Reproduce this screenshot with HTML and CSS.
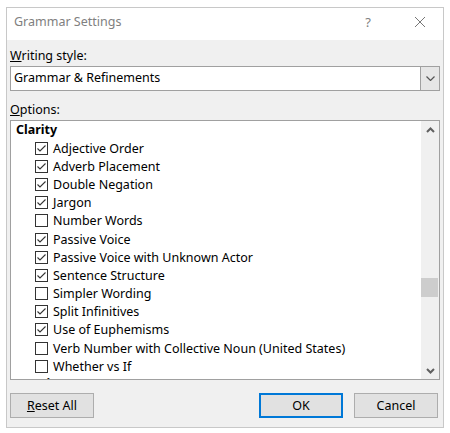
FILE: index.html
```html
<!DOCTYPE html>
<html lang="en">
  <head>
    <meta charset="UTF-8" />
    <title>Grammar Settings</title>
    <link rel="stylesheet" href="styles.css">
  </head>
  <body>
    <div class="dialog">
      <div class="titlebar">
        <span class="title">Grammar Settings</span>
        <span class="help">?</span>
        <span class="close">
          <svg width="12" height="12" viewBox="0 0 12 12"><path d="M1 1L11 11M11 1L1 11" stroke="#777" stroke-width="1" /></svg>
        </span>
      </div>

      <div class="body">
        <label class="label"><u>W</u>riting style:</label>
        <div class="combo">
          <span class="combo-text">Grammar &amp; Refinements</span>
          <span class="combo-btn">
            <svg width="9" height="5" viewBox="0 0 9 5"><path d="M0.5 0.5L4.5 4.5L8.5 0.5" fill="none" stroke="#555" stroke-width="1.2" /></svg>
          </span>
        </div>

        <label class="label options-label"><u>O</u>ptions:</label>
        <div class="listbox">
          <div class="list">
            <div class="group">Clarity</div>
            <div class="item"><span class="box checked"></span>Adjective Order</div>
            <div class="item"><span class="box checked"></span>Adverb Placement</div>
            <div class="item"><span class="box checked"></span>Double Negation</div>
            <div class="item"><span class="box checked"></span>Jargon</div>
            <div class="item"><span class="box"></span>Number Words</div>
            <div class="item"><span class="box checked"></span>Passive Voice</div>
            <div class="item"><span class="box checked"></span>Passive Voice with Unknown Actor</div>
            <div class="item"><span class="box checked"></span>Sentence Structure</div>
            <div class="item"><span class="box"></span>Simpler Wording</div>
            <div class="item"><span class="box checked"></span>Split Infinitives</div>
            <div class="item"><span class="box checked"></span>Use of Euphemisms</div>
            <div class="item"><span class="box"></span>Verb Number with Collective Noun (United States)</div>
            <div class="item"><span class="box"></span>Whether vs If</div>
            <div class="group">Conciseness</div>
          </div>
          <div class="scrollbar">
            <span class="arrow">
              <svg width="9" height="6" viewBox="0 0 9 6"><path d="M1 5L4.5 1.5L8 5" fill="none" stroke="#606060" stroke-width="2" /></svg>
            </span>
            <span class="track"><span class="thumb"></span></span>
            <span class="arrow">
              <svg width="9" height="6" viewBox="0 0 9 6"><path d="M1 1L4.5 4.5L8 1" fill="none" stroke="#606060" stroke-width="2" /></svg>
            </span>
          </div>
        </div>

        <div class="buttons">
          <button class="btn"><u>R</u>eset All</button>
          <span class="spacer"></span>
          <button class="btn default">OK</button>
          <button class="btn">Cancel</button>
        </div>
      </div>
    </div>
  </body>
</html>
```

FILE: styles.css
```css
/* General Reset */
* {
  margin: 0;
  padding: 0;
  box-sizing: border-box;
  font-family: "Noto Sans", "Open Sans", sans-serif;
}

body {
  background-color: #ffffff;
  padding: 7px 6px 5px 6px;
}

/* Dialog frame */
.dialog {
  width: 438px;
  height: 421px;
  border: 1px solid #c8c8c8;
  background-color: #f0f0f0;
  display: flex;
  flex-direction: column;
}

.titlebar {
  height: 32px;
  background-color: #ffffff;
  display: flex;
  align-items: center;
  padding-left: 7px;
  padding-bottom: 5px;
  color: #808080;
  font-size: 12.5px;
}

.title {
  flex-grow: 1;
}

.help {
  width: 46px;
  text-align: center;
  font-size: 13px;
  margin-right: 6px;
}

.close {
  width: 46px;
  display: flex;
  justify-content: center;
  align-items: center;
}

/* Body */
.body {
  flex-grow: 1;
  padding: 7px 3px 0 3px;
  font-size: 12.5px;
  color: #000;
}

.label {
  display: block;
  height: 17px;
  line-height: 17px;
}

.options-label {
  margin-top: 10px;
  margin-bottom: 2px;
}

.combo {
  height: 25px;
  background-color: #fff;
  border: 1px solid #a0a0a0;
  display: flex;
  align-items: stretch;
  margin-top: 2px;
}

.combo-text {
  flex-grow: 1;
  padding-left: 3px;
  line-height: 22px;
}

.combo-btn {
  width: 19px;
  background-color: #e6e6e6;
  border-left: 1px solid #a0a0a0;
  display: flex;
  justify-content: center;
  align-items: center;
}

/* List of options */
.listbox {
  height: 260px;
  background-color: #fff;
  border: 1px solid #a0a0a0;
  display: flex;
  overflow: hidden;
}

.list {
  flex-grow: 1;
  padding-left: 5px;
  overflow: hidden;
}

.group {
  font-weight: bold;
  height: 18px;
  line-height: 17px;
}

.item {
  height: 18.2px;
  display: flex;
  align-items: center;
  padding-left: 19px;
  white-space: nowrap;
}

.box {
  width: 13px;
  height: 13px;
  border: 1px solid #333;
  margin-right: 5px;
  flex-shrink: 0;
  background-color: #fff;
  background-position: center;
  background-repeat: no-repeat;
}

.box.checked {
  background-image: url("data:image/svg+xml,%3Csvg xmlns='http://www.w3.org/2000/svg' width='11' height='11' viewBox='0 0 11 11'%3E%3Cpath d='M1.5 5.5L4 8L9.5 2.5' fill='none' stroke='%23333' stroke-width='1.1'/%3E%3C/svg%3E");
}

.scrollbar {
  width: 18px;
  background-color: #f0f0f0;
  display: flex;
  flex-direction: column;
}

.arrow {
  height: 17px;
  display: flex;
  justify-content: center;
  align-items: center;
}

.track {
  flex-grow: 1;
  position: relative;
}

.thumb {
  position: absolute;
  left: 0;
  right: 1px;
  top: 140px;
  height: 19px;
  background-color: #cdcdcd;
}

/* Buttons */
.buttons {
  display: flex;
  margin-top: 13px;
  padding-right: 2px;
  gap: 11px;
}

.spacer {
  flex-grow: 1;
}

.btn {
  width: 84px;
  height: 25px;
  background-color: #e1e1e1;
  border: 1px solid #adadad;
  font-size: 12.5px;
  color: #000;
}

.btn.default {
  border: 2px solid #0078d7;
}
```
